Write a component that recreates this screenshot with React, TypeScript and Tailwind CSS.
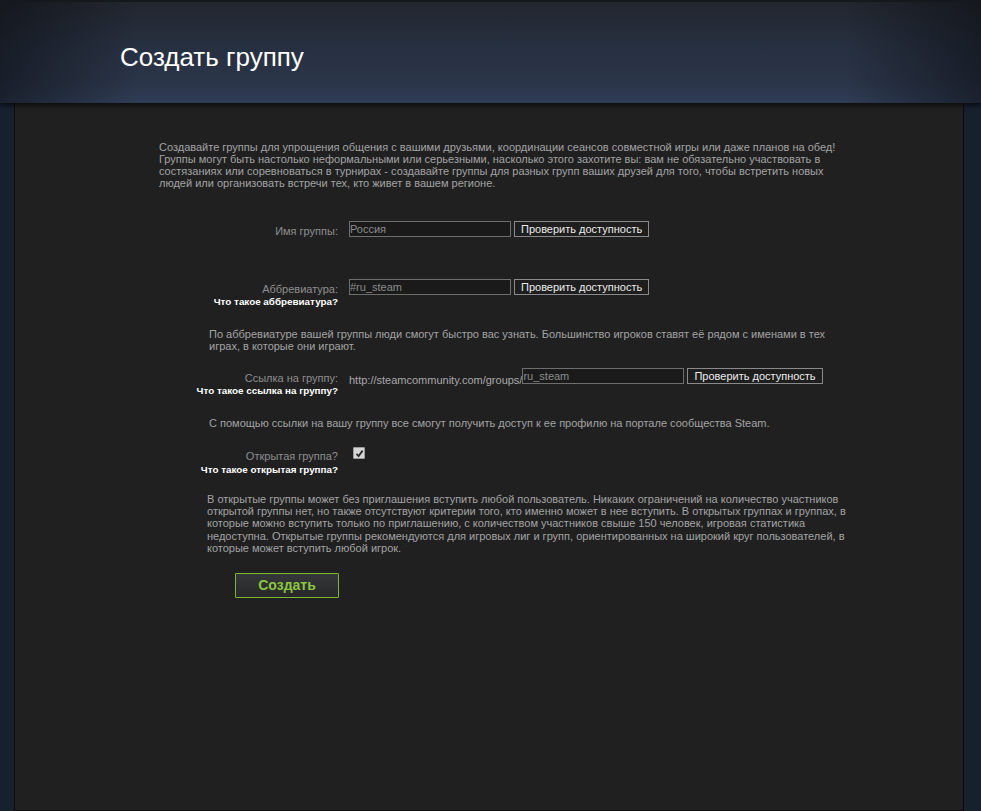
import React, { useState } from 'react';

const font = "font-['Liberation_Sans',Arial,sans-serif]";

interface FieldRowProps {
  label: string;
  hint?: string;
  labelClass?: string;
  children: React.ReactNode;
}

const FieldRow: React.FC<FieldRowProps> = ({ label, hint, labelClass = 'pt-[2px]', children }) => (
  <div className="flex items-start gap-[11px]">
    <div className="w-[179px] shrink-0 text-right">
      <div className={`${labelClass} text-[11px] leading-[16px] text-[#8e8e8e]`}>{label}</div>
      {hint && (
        <div className="text-[9.85px] font-bold leading-[10px] text-white">{hint}</div>
      )}
    </div>
    <div className="flex items-start">{children}</div>
  </div>
);

const CheckButton: React.FC = () => (
  <button className="ml-[3px] h-[16px] border border-[#8a8a8a] bg-[#1e1e1e] px-[6px] text-[11px] leading-[14px] text-[#ececec]">
    Проверить доступность
  </button>
);

const TextInput: React.FC<{ value: string; onChange: (v: string) => void }> = ({ value, onChange }) => (
  <input
    type="text"
    value={value}
    onChange={(e) => onChange(e.target.value)}
    className="h-[16px] w-[162px] border border-[#6e6e6e] bg-[#1a1a1a] px-0 text-[11px] leading-[14px] text-[#8c8c8c] outline-none"
  />
);

export default function App() {
  const [name, setName] = useState('Россия');
  const [abbr, setAbbr] = useState('#ru_steam');
  const [url, setUrl] = useState('ru_steam');
  const [isOpen, setIsOpen] = useState(true);

  return (
    <div className={`${font} min-h-[811px] bg-[#17202d]`}>
      {/* Header band */}
      <div className="relative z-10 h-[103px] border-t-2 border-[#15181d] bg-[linear-gradient(to_right,rgba(10,12,16,0.55),rgba(10,12,16,0)_14%,rgba(10,12,16,0)_86%,rgba(10,12,16,0.55)),linear-gradient(to_bottom,#22262e_0%,#273041_45%,#2b3549_80%,#2f3d56_100%)] shadow-[0_2px_5px_rgba(0,0,0,0.7)]">
        <h1 className="pl-[120px] pt-[40px] text-[26px] leading-[30px] text-white">Создать группу</h1>
      </div>

      {/* Content panel */}
      <div className="ml-[14px] mr-[17px] min-h-[708px] border-x border-b border-[#0c0c0c] bg-[#202021] pb-[40px]">
        <div className="pl-[144px] pr-[110px] pt-[38px]">
          <p className="w-[690px] text-[11px] leading-[12px] text-[#a3a3a3]">
            Создавайте группы для упрощения общения с вашими друзьями, координации сеансов совместной игры или даже планов на обед!
            Группы могут быть настолько неформальными или серьезными, насколько этого захотите вы: вам не обязательно участвовать в
            состязаниях или соревноваться в турнирах - создавайте группы для разных групп ваших друзей для того, чтобы встретить новых
            людей или организовать встречи тех, кто живет в вашем регионе.
          </p>

          <div className="mt-[32px]">
            <FieldRow label="Имя группы:">
              <TextInput value={name} onChange={setName} />
              <CheckButton />
            </FieldRow>
          </div>

          <div className="mt-[40px]">
            <FieldRow label="Аббревиатура:" hint="Что такое аббревиатура?">
              <TextInput value={abbr} onChange={setAbbr} />
              <CheckButton />
            </FieldRow>
          </div>

          <p className="ml-[50px] mt-[21px] w-[650px] text-[11px] leading-[12px] text-[#a3a3a3]">
            По аббревиатуре вашей группы люди смогут быстро вас узнать. Большинство игроков ставят её рядом с именами в тех
            играх, в которые они играют.
          </p>

          <div className="mt-[16px]">
            <FieldRow label="Ссылка на группу:" hint="Что такое ссылка на группу?">
              <span className="pt-[5px] text-[11px] leading-[14px] text-[#a8a8a8]">http://steamcommunity.com/groups/</span>
              <TextInput value={url} onChange={setUrl} />
              <CheckButton />
            </FieldRow>
          </div>

          <p className="ml-[50px] mt-[21px] text-[11px] leading-[12px] text-[#a3a3a3]">
            С помощью ссылки на вашу группу все смогут получить доступ к ее профилю на портале сообщества Steam.
          </p>

          <div className="mt-[16px]">
            <FieldRow label="Открытая группа?" hint="Что такое открытая группа?" labelClass="pt-[3px] pb-[1px]">
              <button
                onClick={() => setIsOpen(!isOpen)}
                className="ml-[4px] mt-[2px] flex h-[12px] w-[12px] items-center justify-center rounded-[1px] border border-[#9a9a9a] bg-[#d6d6d6]"
              >
                {isOpen && (
                  <svg width="9" height="9" viewBox="0 0 9 9">
                    <path d="M1.5 4.8 L3.6 7 L7.6 1.6" fill="none" stroke="#2a2a2a" strokeWidth="1.8" />
                  </svg>
                )}
              </button>
            </FieldRow>
          </div>

          <p className="ml-[48px] mt-[18px] w-[650px] text-[11px] leading-[12.2px] text-[#a3a3a3]">
            В открытые группы может без приглашения вступить любой пользователь. Никаких ограничений на количество участников
            открытой группы нет, но также отсутствуют критерии того, кто именно может в нее вступить. В открытых группах и группах, в
            которые можно вступить только по приглашению, с количеством участников свыше 150 человек, игровая статистика
            недоступна. Открытые группы рекомендуются для игровых лиг и групп, ориентированных на широкий круг пользователей, в
            которые может вступить любой игрок.
          </p>

          <button className="ml-[76px] mt-[19px] h-[25px] w-[104px] rounded-[1px] border border-[#7cb82f] bg-[linear-gradient(to_bottom,#363738,#262728)] text-[14px] font-bold text-[#8cc63f]">
            Создать
          </button>
        </div>
      </div>
    </div>
  );
}
